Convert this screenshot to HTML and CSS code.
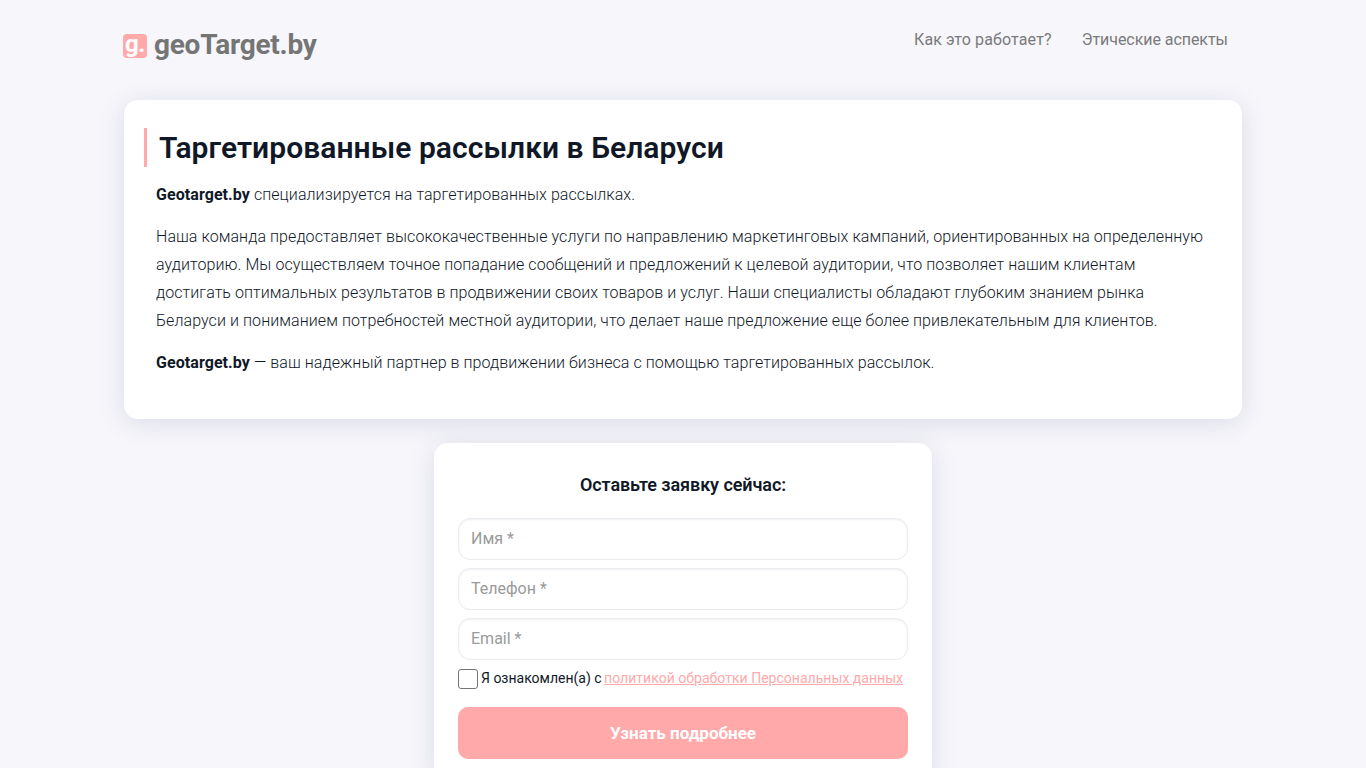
FILE: index.html
```html
<!DOCTYPE html>
<html lang="ru">
<head>
    <meta charset="UTF-8">
    <meta name="viewport" content="width=device-width, initial-scale=1.0">
    <title>geoTarget.by</title>
    <link rel="stylesheet" href="styles.css">
</head>
<body>
    <div class="wrap">
        <header class="header">
            <a class="logo" href="#"><span class="logo-icon">g.</span>geoTarget.by</a>
            <nav class="nav">
                <a href="#">Как это работает?</a>
                <a href="#">Этические аспекты</a>
            </nav>
        </header>

        <section class="card">
            <h1 class="title">Таргетированные рассылки в Беларуси</h1>
            <div class="text">
                <p><b>Geotarget.by</b> специализируется на таргетированных рассылках.</p>
                <p>Наша команда предоставляет высококачественные услуги по направлению маркетинговых кампаний, ориентированных на определенную аудиторию. Мы осуществляем точное попадание сообщений и предложений к целевой аудитории, что позволяет нашим клиентам достигать оптимальных результатов в продвижении своих товаров и услуг. Наши специалисты обладают глубоким знанием рынка Беларуси и пониманием потребностей местной аудитории, что делает наше предложение еще более привлекательным для клиентов.</p>
                <p><b>Geotarget.by</b> — ваш надежный партнер в продвижении бизнеса с помощью таргетированных рассылок.</p>
            </div>
        </section>

        <form class="form">
            <h2 class="form-title">Оставьте заявку сейчас:</h2>
            <input class="field" type="text" placeholder="Имя *">
            <input class="field" type="text" placeholder="Телефон *">
            <input class="field" type="text" placeholder="Email *">
            <label class="agree">
                <span class="box"></span>
                <span class="agree-text">Я ознакомлен(а) с <a href="#">политикой обработки Персональных данных</a></span>
            </label>
            <button class="btn" type="button">Узнать подробнее</button>
        </form>
    </div>
</body>
</html>
```

FILE: styles.css
```css
* {
    margin: 0;
    padding: 0;
    box-sizing: border-box;
}
body {
    background: #f6f6fb;
    color: #101828;
    font-family: Roboto, "Liberation Sans", sans-serif;
}
a {
    text-decoration: none;
}
.wrap {
    width: 1120px;
    margin: 0 auto;
    padding-bottom: 40px;
}

.header {
    height: 100px;
    display: flex;
    justify-content: space-between;
    align-items: flex-start;
}
.logo {
    display: flex;
    align-items: center;
    gap: 7px;
    margin-top: 28px;
    font-size: 28px;
    line-height: 34px;
    font-weight: 700;
    letter-spacing: -0.25px;
    color: #757575;
}
.logo-icon {
    width: 24px;
    height: 24px;
    margin-top: 2px;
    border-radius: 4px;
    background: #ffa9aa;
    color: #fff;
    font-size: 24px;
    line-height: 20px;
    text-align: center;
}
.nav {
    display: flex;
    gap: 30px;
    margin-top: 28px;
    padding-right: 15px;
}
.nav a {
    font-size: 16px;
    line-height: 24px;
    letter-spacing: -0.05px;
    color: #7a7a7a;
}
.nav a:first-child {
    letter-spacing: 0.13px;
}

.card {
    width: 1118px;
    margin-left: 1px;
    height: 319px;
    padding: 28px 20px 0;
    background: #fff;
    border-radius: 14px;
    box-shadow: 0 4px 26px rgba(50, 50, 93, 0.13);
}
.title {
    border-left: 3px solid #ffa9aa;
    padding-left: 12px;
    font-size: 30px;
    line-height: 39px;
    font-weight: 600;
    letter-spacing: 0.06px;
}
.text {
    padding: 0 12px;
    margin-top: 14px;
    font-size: 16px;
    line-height: 28px;
    font-weight: 300;
    letter-spacing: 0.07px;
}
.text p {
    margin-bottom: 14px;
}
.text b {
    font-weight: 700;
}

.form {
    width: 498px;
    margin: 24px auto 0;
    padding: 24px;
    background: #fff;
    border-radius: 14px;
    box-shadow: 0 4px 26px rgba(50, 50, 93, 0.13);
}
.form-title {
    margin-bottom: 15px;
    font-size: 18px;
    line-height: 36px;
    font-weight: 600;
    letter-spacing: -0.08px;
    text-align: center;
}
.field {
    display: block;
    width: 100%;
    height: 42px;
    margin-bottom: 8px;
    padding: 0 12px 2px;
    border: 1px solid #ebebf0;
    border-radius: 12px;
    background: #fff;
    box-shadow: inset 0 1px 2px rgba(50, 50, 93, 0.08);
    font-family: inherit;
    font-size: 16px;
    outline: none;
}
.field::placeholder {
    color: #9a9a9a;
}
.agree {
    display: flex;
    align-items: center;
    gap: 3px;
    height: 22px;
    margin-bottom: 17px;
    font-size: 14px;
}
.agree-text {
    margin-top: -2px;
}
.box {
    width: 20px;
    height: 20px;
    border: 1px solid #767676;
    border-radius: 3px;
    background: #fff;
}
.agree a {
    margin-left: -1px;
    letter-spacing: 0.03px;
    color: #ffa9aa;
    text-decoration: underline;
}
.btn {
    display: block;
    width: 100%;
    height: 52px;
    border: 0;
    border-radius: 10px;
    background: #ffa9aa;
    color: #fff;
    font-family: inherit;
    font-size: 17px;
    font-weight: 700;
}
```
